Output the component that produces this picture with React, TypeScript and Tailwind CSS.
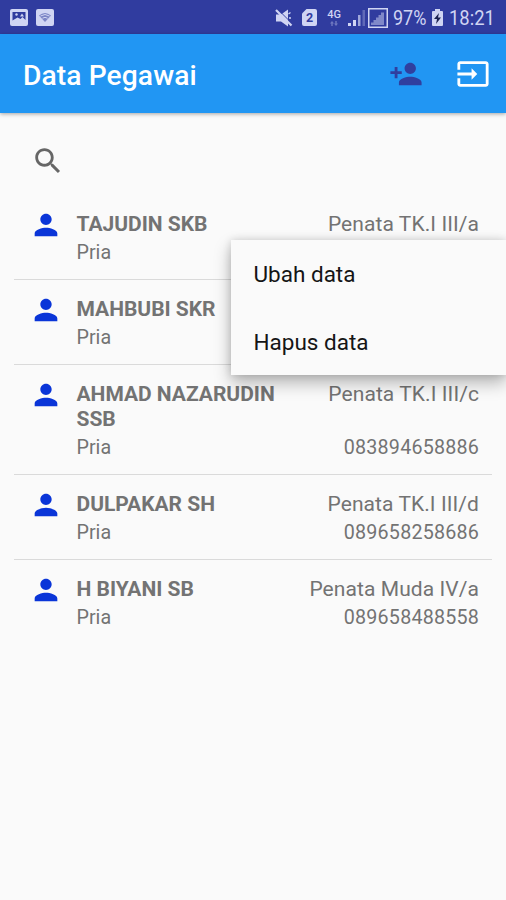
type Employee = {
  name: string
  gender: string
  rank?: string
  phone?: string
}

const employees: Employee[] = [
  { name: 'TAJUDIN SKB', gender: 'Pria', rank: 'Penata TK.I III/a' },
  { name: 'MAHBUBI SKR', gender: 'Pria' },
  { name: 'AHMAD NAZARUDIN SSB', gender: 'Pria', rank: 'Penata TK.I III/c', phone: '083894658886' },
  { name: 'DULPAKAR SH', gender: 'Pria', rank: 'Penata TK.I III/d', phone: '089658258686' },
  { name: 'H BIYANI SB', gender: 'Pria', rank: 'Penata Muda IV/a', phone: '089658488558' },
]

const icons = {
  search:
    'M15.5 14h-.79l-.28-.27C15.41 12.59 16 11.11 16 9.5 16 5.91 13.09 3 9.5 3S3 5.91 3 9.5 5.91 16 9.5 16c1.61 0 3.09-.59 4.23-1.57l.27.28v.79l5 4.99L20.49 19l-4.99-5zm-6 0C7.01 14 5 11.99 5 9.5S7.01 5 9.5 5 14 7.01 14 9.5 11.99 14 9.5 14z',
  person:
    'M12 12c2.21 0 4-1.79 4-4s-1.79-4-4-4-4 1.79-4 4 1.79 4 4 4zm0 2c-2.67 0-8 1.34-8 4v2h16v-2c0-2.66-5.33-4-8-4z',
  personAdd:
    'M15 12c2.21 0 4-1.79 4-4s-1.79-4-4-4-4 1.79-4 4 1.79 4 4 4zm-9-2V7H4v3H1v2h3v3h2v-3h3v-2H6zm9 4c-2.67 0-8 1.34-8 4v2h16v-2c0-2.66-5.33-4-8-4z',
  input:
    'M21 3.01H3c-1.1 0-2 .9-2 2V9h2V4.99h18v14.03H3V15H1v4.01c0 1.1.9 1.98 2 1.98h18c1.1 0 2-.88 2-1.98v-14c0-1.11-.9-2-2-2zM11 16l4-4-4-4v3H1v2h10v3z',
}

function Icon({ path, className }: { path: string; className: string }) {
  return (
    <svg viewBox="0 0 24 24" fill="currentColor" className={'shrink-0 ' + className}>
      <path d={path} />
    </svg>
  )
}

function StatusBar() {
  return (
    <div className="flex h-[34px] items-center justify-between bg-[#303c9f] pt-px pl-[10px] pr-[11px] text-[#d0d5f3]">
      <div className="flex gap-2">
        <svg viewBox="0 0 18 17" className="h-[17px] w-[18px]">
          <rect width="18" height="17" rx="2" fill="currentColor" />
          <path d="M2.500 3h13v8l-3-3-2 2-3-1.500-5 3z" fill="#303c9f" />
          <circle cx="6.500" cy="5.500" r="1.200" fill="currentColor" />
          <path d="M10 7.500l2-3 2 3z" fill="currentColor" />
        </svg>
        <svg viewBox="0 0 18 17" className="h-[17px] w-[18px]">
          <rect width="18" height="17" rx="2" fill="currentColor" />
          <path d="M3 6.500Q9 1.500 15 6.500L9 13z" fill="#7c85c6" />
          <path d="M4.500 7Q9 4 13.500 7M6.500 9.200Q9 7.500 11.500 9.200" fill="none" stroke="#d0d5f3" />
        </svg>
      </div>

      <div className="flex items-center">
        <svg viewBox="0 0 18 18" className="mr-[9px] size-[18px]">
          <path d="M1 5.500h5l7-5v17l-7-5H1z" fill="currentColor" />
          <path d="M13.500 5l2-1.500M14 9h2" fill="none" stroke="currentColor" strokeWidth="1.300" />
          <path d="M3 .5L17.500 15" stroke="#303c9f" strokeWidth="1" />
          <path d="M1 1l15.500 15.500" stroke="currentColor" strokeWidth="2.200" />
        </svg>
        <svg viewBox="0 0 15 17" className="mr-[10px] h-[17px] w-[15px]">
          <path d="M4.500 0H13a2 2 0 0 1 2 2v13a2 2 0 0 1-2 2H2a2 2 0 0 1-2-2V4.500z" fill="currentColor" />
          <text x="7.500" y="13.200" textAnchor="middle" fontSize="12.500" fontWeight="700" fill="#303c9f">
            2
          </text>
        </svg>
        <div className="mr-[7px] flex w-[14px] flex-col items-center">
          <span className="text-[11px] leading-[9px] font-medium">4G</span>
          <svg viewBox="0 0 8 5" className="mt-[2px] h-[5px] w-[8px] opacity-40">
            <path d="M2 0l2 2.500H2.700V5H1.300V2.500H0zM6 5L4 2.500h1.300V0h1.400v2.500H8z" fill="currentColor" />
          </svg>
        </div>
        <svg viewBox="0 0 17 17" className="mr-[3px] h-[17px] w-[17px]">
          <path d="M0 14h3v3H0zM5 11h3v6H5z" fill="currentColor" />
          <path d="M10 6h2.500v11H10z" fill="currentColor" opacity=".7" />
          <path d="M14.500 1H17v16h-2.500z" fill="currentColor" opacity=".3" />
        </svg>
        <svg viewBox="0 0 20 20" className="mr-[5px] size-[20px]">
          <rect x=".75" y=".75" width="18.500" height="18.500" fill="none" stroke="currentColor" strokeWidth="1.500" />
          <path d="M3 17v-2.500h2.500V12H8V9.500h2.500V7H13V4.500h3V17z" fill="currentColor" opacity=".5" />
        </svg>
        <span className="w-[34px] origin-left scale-x-[.9] pt-px text-[20px] leading-[32px]">97%</span>
        <svg viewBox="0 0 11 17" className="mr-[6px] ml-[5px] h-[17px] w-[11px]">
          <path d="M3 0h5v2h2a1 1 0 0 1 1 1v13a1 1 0 0 1-1 1H1a1 1 0 0 1-1-1V3a1 1 0 0 1 1-1h2z" fill="currentColor" />
          <path d="M7 4L2 10h3l-1 5 5-6.500H6z" fill="#1c2350" />
        </svg>
        <span className="w-[46px] origin-left scale-x-[.92] pt-px text-[20px] leading-[32px]">18:21</span>
      </div>
    </div>
  )
}

function AppBar() {
  return (
    <header className="flex h-[79px] items-center bg-[#2196f3] pr-[16px] pl-[23px] text-white shadow-[0_1px_4px_rgba(0,0,0,0.35)]">
      <h1 className="flex-1 pt-[4px] text-[28.200px] leading-8 font-medium tracking-[0.1px]">Data Pegawai</h1>
      <Icon path={icons.personAdd} className="mr-[33.500px] size-[34px] text-[#303f9f]" />
      <Icon path={icons.input} className="size-[34px]" />
    </header>
  )
}

function EmployeeRow({ employee }: { employee: Employee }) {
  return (
    <li className="flex border-b border-[#dadada] pt-[17px] pr-[13px] pb-[15px] pl-[14px] last:border-b-0">
      <Icon path={icons.person} className="-mt-[4px] mr-[14px] ml-[0.500px] size-[34px] text-[#0a35d8]" />
      <div className="flex-1">
        <div className="flex justify-between text-[21px] leading-[24.600px]">
          <span className="w-[225px] font-bold tracking-[-0.02px]">{employee.name}</span>
          <span className="tracking-[0.08px] whitespace-nowrap">{employee.rank}</span>
        </div>
        <div className="mt-[4.400px] flex justify-between text-[19.700px] leading-[23px]">
          <span>{employee.gender}</span>
          <span className="tracking-[0.2px]">{employee.phone}</span>
        </div>
      </div>
    </li>
  )
}

function ContextMenu() {
  return (
    <div className="absolute top-[240px] right-0 flex h-[135px] w-[275px] flex-col bg-[#fafafa] pl-[22.500px] text-[22.500px] text-[#151515] shadow-[0_8px_16px_rgba(0,0,0,0.28),0_0_8px_rgba(0,0,0,0.14)]">
      <button className="flex-1 pt-[3px] text-left">Ubah data</button>
      <button className="flex-1 pt-[3px] text-left">Hapus data</button>
    </div>
  )
}

export default function App() {
  return (
    <div className="relative h-[900px] w-[506px] overflow-hidden bg-[#fafafa] font-['Roboto',sans-serif] text-[#737373]">
      <StatusBar />
      <AppBar />
      <div className="flex h-[82px] items-center pt-[13px] pl-[31px]">
        <Icon path={icons.search} className="size-[34px] text-[#666666]" />
      </div>
      <ul className="mx-[14px]">
        {employees.map((employee) => (
          <EmployeeRow key={employee.name} employee={employee} />
        ))}
      </ul>
      <ContextMenu />
    </div>
  )
}
